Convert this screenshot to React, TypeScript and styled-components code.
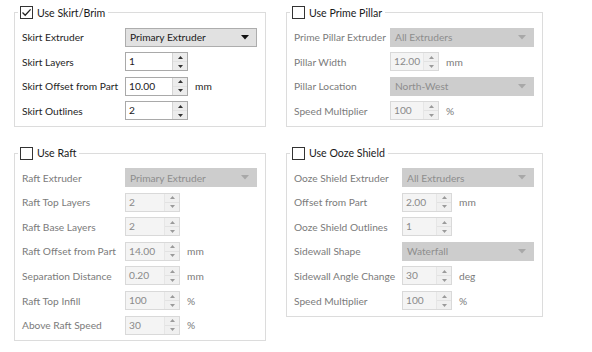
import React from "react";
import styled, { createGlobalStyle } from "styled-components";

const GlobalStyle = createGlobalStyle`
  body {
    margin: 0;
    background: #ffffff;
    font-family: Lato, "Liberation Sans", sans-serif;
    font-size: 10.2px;
    color: #1e1e1e;
  }
`;

const Page = styled.div`
  display: grid;
  grid-template-columns: 252px 257px;
  column-gap: 20px;
  row-gap: 8px;
  align-items: start;
  padding: 5px 0 0 14px;
  width: 592px;
  height: 352px;
  box-sizing: border-box;
`;

const Group = styled.fieldset`
  margin: 0;
  padding: 0;
  min-width: 0;
  border: 1px solid #dcdcdc;
`;

const Legend = styled.legend`
  display: flex;
  align-items: center;
  gap: 4px;
  margin-left: 3px;
  padding: 0 3px 0 2px;
  height: 15px;
  font-size: 10.6px;
  color: #1a1a1a;
`;

const Box = styled.span`
  width: 11px;
  height: 11px;
  border: 1px solid #333333;
  background: #ffffff;
  display: inline-flex;
  align-items: center;
  justify-content: center;
`;

const Rows = styled.div<{ $label: number }>`
  display: grid;
  grid-template-columns: ${(p) => p.$label}px 1fr;
  row-gap: 4.6px;
  align-items: center;
  padding: 7px 8px 5px 7px;
`;

const Label = styled.span<{ $off?: boolean }>`
  color: ${(p) => (p.$off ? "#7b7b7b" : "#1e1e1e")};
  white-space: nowrap;
  line-height: 20px;
`;

const Field = styled.div`
  display: flex;
  align-items: center;
  gap: 7px;
  height: 20px;
`;

const Select = styled.div<{ $off?: boolean }>`
  flex: 1;
  height: 19px;
  box-sizing: border-box;
  display: flex;
  align-items: center;
  justify-content: space-between;
  padding: 0 7px 0 4px;
  background: ${(p) => (p.$off ? "#cdcdcd" : "#e1e1e1")};
  border: 1px solid ${(p) => (p.$off ? "#cdcdcd" : "#adadad")};
  color: ${(p) => (p.$off ? "#8e8e8e" : "#1a1a1a")};
`;

const Spin = styled.div<{ $w: number; $off?: boolean }>`
  width: ${(p) => p.$w}px;
  height: 19px;
  box-sizing: border-box;
  display: flex;
  align-items: stretch;
  border: 1px solid ${(p) => (p.$off ? "#d9d9d9" : "#a9a9a9")};
  background: ${(p) => (p.$off ? "#f4f4f4" : "#ffffff")};
  color: ${(p) => (p.$off ? "#8a8a8a" : "#1a1a1a")};
`;

const SpinText = styled.span`
  flex: 1;
  padding-left: 3px;
  line-height: 17px;
`;

const SpinButtons = styled.div<{ $off?: boolean }>`
  width: 14px;
  display: flex;
  flex-direction: column;
  border-left: 1px solid ${(p) => (p.$off ? "#e6e6e6" : "#d4d4d4")};
  background: ${(p) => (p.$off ? "#f0f0f0" : "#ececec")};
`;

const SpinHalf = styled.div<{ $off?: boolean }>`
  flex: 1;
  display: flex;
  align-items: center;
  justify-content: center;
  & + & {
    border-top: 1px solid ${(p) => (p.$off ? "#e2e2e2" : "#cfcfcf")};
  }
`;

const Unit = styled.span<{ $off?: boolean }>`
  color: ${(p) => (p.$off ? "#7b7b7b" : "#1e1e1e")};
`;

const Check = () => (
  <svg width="11" height="11" viewBox="0 0 11 11">
    <path d="M1.5 5.5 L4.2 8.2 L9.6 2.4" fill="none" stroke="#222" strokeWidth="1.3" />
  </svg>
);

const Arrow = ({ off }: { off?: boolean }) => (
  <svg width="8" height="5" viewBox="0 0 8 5">
    <path d="M0 0 H8 L4 4.5 Z" fill={off ? "#a8a8a8" : "#111"} />
  </svg>
);

const Tri = ({ up, off }: { up?: boolean; off?: boolean }) => (
  <svg width="5" height="3" viewBox="0 0 5 3">
    <path d={up ? "M0 3 H5 L2.5 0 Z" : "M0 0 H5 L2.5 3 Z"} fill={off ? "#9a9a9a" : "#333"} />
  </svg>
);

type Row =
  | { label: string; kind: "select"; value: string }
  | { label: string; kind: "spin"; value: string; unit?: string };

type GroupDef = {
  title: string;
  checked?: boolean;
  label: number;
  spin: number;
  rows: Row[];
};

const groups: GroupDef[] = [
  {
    title: "Use Skirt/Brim",
    checked: true,
    label: 103,
    spin: 63,
    rows: [
      { label: "Skirt Extruder", kind: "select", value: "Primary Extruder" },
      { label: "Skirt Layers", kind: "spin", value: "1" },
      { label: "Skirt Offset from Part", kind: "spin", value: "10.00", unit: "mm" },
      { label: "Skirt Outlines", kind: "spin", value: "2" },
    ],
  },
  {
    title: "Use Prime Pillar",
    label: 96,
    spin: 49,
    rows: [
      { label: "Prime Pillar Extruder", kind: "select", value: "All Extruders" },
      { label: "Pillar Width", kind: "spin", value: "12.00", unit: "mm" },
      { label: "Pillar Location", kind: "select", value: "North-West" },
      { label: "Speed Multiplier", kind: "spin", value: "100", unit: "%" },
    ],
  },
  {
    title: "Use Raft",
    label: 103,
    spin: 55,
    rows: [
      { label: "Raft Extruder", kind: "select", value: "Primary Extruder" },
      { label: "Raft Top Layers", kind: "spin", value: "2" },
      { label: "Raft Base Layers", kind: "spin", value: "2" },
      { label: "Raft Offset from Part", kind: "spin", value: "14.00", unit: "mm" },
      { label: "Separation Distance", kind: "spin", value: "0.20", unit: "mm" },
      { label: "Raft Top Infill", kind: "spin", value: "100", unit: "%" },
      { label: "Above Raft Speed", kind: "spin", value: "30", unit: "%" },
    ],
  },
  {
    title: "Use Ooze Shield",
    label: 108,
    spin: 50,
    rows: [
      { label: "Ooze Shield Extruder", kind: "select", value: "All Extruders" },
      { label: "Offset from Part", kind: "spin", value: "2.00", unit: "mm" },
      { label: "Ooze Shield Outlines", kind: "spin", value: "1" },
      { label: "Sidewall Shape", kind: "select", value: "Waterfall" },
      { label: "Sidewall Angle Change", kind: "spin", value: "30", unit: "deg" },
      { label: "Speed Multiplier", kind: "spin", value: "100", unit: "%" },
    ],
  },
];

const SettingsGroup = ({ g }: { g: GroupDef }) => {
  const off = !g.checked;
  return (
    <Group>
      <Legend>
        <Box>{g.checked && <Check />}</Box>
        {g.title}
      </Legend>
      <Rows $label={g.label}>
        {g.rows.map((r) => (
          <React.Fragment key={r.label}>
            <Label $off={off}>{r.label}</Label>
            <Field>
              {r.kind === "select" ? (
                <Select $off={off}>
                  {r.value}
                  <Arrow off={off} />
                </Select>
              ) : (
                <>
                  <Spin $w={g.spin} $off={off}>
                    <SpinText>{r.value}</SpinText>
                    <SpinButtons $off={off}>
                      <SpinHalf $off={off}>
                        <Tri up off={off} />
                      </SpinHalf>
                      <SpinHalf $off={off}>
                        <Tri off={off} />
                      </SpinHalf>
                    </SpinButtons>
                  </Spin>
                  {r.unit && <Unit $off={off}>{r.unit}</Unit>}
                </>
              )}
            </Field>
          </React.Fragment>
        ))}
      </Rows>
    </Group>
  );
};

export default function App() {
  return (
    <>
      <GlobalStyle />
      <Page>
        {groups.map((g) => (
          <SettingsGroup key={g.title} g={g} />
        ))}
      </Page>
    </>
  );
}
